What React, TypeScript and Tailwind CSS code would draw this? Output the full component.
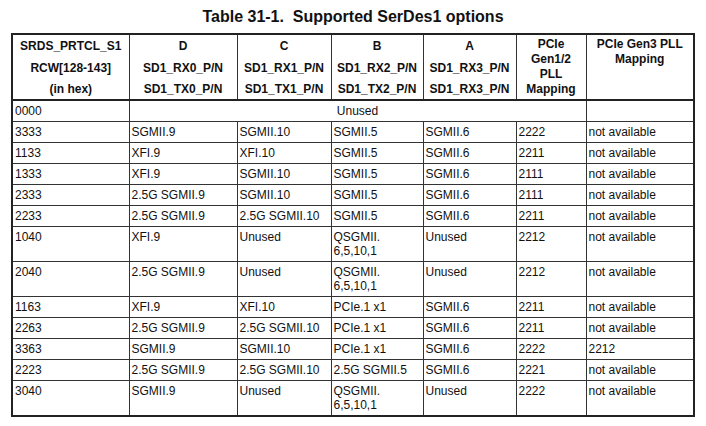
import React from "react";

type Row = {
  code: string;
  d?: string;
  c?: string;
  b?: string[];
  a?: string;
  gen12?: string;
  gen3?: string;
  tall?: boolean;
};

const rows: Row[] = [
  { code: "3333", d: "SGMII.9", c: "SGMII.10", b: ["SGMII.5"], a: "SGMII.6", gen12: "2222", gen3: "not available" },
  { code: "1133", d: "XFI.9", c: "XFI.10", b: ["SGMII.5"], a: "SGMII.6", gen12: "2211", gen3: "not available" },
  { code: "1333", d: "XFI.9", c: "SGMII.10", b: ["SGMII.5"], a: "SGMII.6", gen12: "2111", gen3: "not available" },
  { code: "2333", d: "2.5G SGMII.9", c: "SGMII.10", b: ["SGMII.5"], a: "SGMII.6", gen12: "2111", gen3: "not available" },
  { code: "2233", d: "2.5G SGMII.9", c: "2.5G SGMII.10", b: ["SGMII.5"], a: "SGMII.6", gen12: "2211", gen3: "not available" },
  { code: "1040", d: "XFI.9", c: "Unused", b: ["QSGMII.", "6,5,10,1"], a: "Unused", gen12: "2212", gen3: "not available", tall: true },
  { code: "2040", d: "2.5G SGMII.9", c: "Unused", b: ["QSGMII.", "6,5,10,1"], a: "Unused", gen12: "2212", gen3: "not available", tall: true },
  { code: "1163", d: "XFI.9", c: "XFI.10", b: ["PCIe.1 x1"], a: "SGMII.6", gen12: "2211", gen3: "not available" },
  { code: "2263", d: "2.5G SGMII.9", c: "2.5G SGMII.10", b: ["PCIe.1 x1"], a: "SGMII.6", gen12: "2211", gen3: "not available" },
  { code: "3363", d: "SGMII.9", c: "SGMII.10", b: ["PCIe.1 x1"], a: "SGMII.6", gen12: "2222", gen3: "2212" },
  { code: "2223", d: "2.5G SGMII.9", c: "2.5G SGMII.10", b: ["2.5G SGMII.5"], a: "SGMII.6", gen12: "2221", gen3: "not available" },
  { code: "3040", d: "SGMII.9", c: "Unused", b: ["QSGMII.", "6,5,10,1"], a: "Unused", gen12: "2222", gen3: "not available", tall: true },
];

const laneHeads = [
  ["D", "SD1_RX0_P/N", "SD1_TX0_P/N"],
  ["C", "SD1_RX1_P/N", "SD1_TX1_P/N"],
  ["B", "SD1_RX2_P/N", "SD1_TX2_P/N"],
  ["A", "SD1_RX3_P/N", "SD1_RX3_P/N"],
];

const th = "border border-[#333] border-b-2 border-b-[#222] p-0 align-top text-center font-bold";
const td = "border border-[#333] px-[2px] pt-[3px] pb-[3px] align-top text-left font-normal leading-[14px]";

// three stacked header lines, the last one a little shorter
function HeadLines({ lines }: { lines: string[] }) {
  return (
    <div className="flex flex-col">
      <span className="leading-[22px]">{lines[0]}</span>
      <span className="leading-[22px]">{lines[1]}</span>
      <span className="leading-[20px]">{lines[2]}</span>
    </div>
  );
}

export default function App() {
  return (
    <div
      className="w-[706px] h-[426px] bg-white text-[#111] overflow-hidden"
      style={{ fontFamily: '"Liberation Sans", Arial, sans-serif' }}
    >
      {/* Caption */}
      <div className="h-[33px] flex items-center justify-center">
        <h1 className="text-[16px] font-bold leading-none text-[#111] whitespace-pre">
          {"Table 31-1.  Supported SerDes1 options"}
        </h1>
      </div>

      <div className="pl-[11px]">
        <table className="table-fixed border-collapse border-2 border-[#222] w-[682px] text-[12px]">
          <colgroup>
            <col className="w-[117px]" />
            <col className="w-[108px]" />
            <col className="w-[94px]" />
            <col className="w-[92px]" />
            <col className="w-[93px]" />
            <col className="w-[70px]" />
            <col className="w-[108px]" />
          </colgroup>
          <thead>
            <tr>
              <th className={th}>
                <HeadLines lines={["SRDS_PRTCL_S1", "RCW[128-143]", "(in hex)"]} />
              </th>
              {laneHeads.map((h) => (
                <th key={h[0]} className={th}>
                  <HeadLines lines={h} />
                </th>
              ))}
              <th className={th}>
                <div className="flex flex-col pt-[2px] leading-[15px]">
                  <span>PCIe</span>
                  <span>Gen1/2</span>
                  <span>PLL</span>
                  <span>Mapping</span>
                </div>
              </th>
              <th className={th}>
                <div className="flex flex-col pt-[2px] leading-[15px]">
                  <span>PCIe Gen3 PLL</span>
                  <span>Mapping</span>
                </div>
              </th>
            </tr>
          </thead>
          <tbody>
            <tr className="h-[21px]">
              <td className={td}>0000</td>
              <td className={`${td} text-center`} colSpan={5}>
                <div className="text-center">Unused</div>
              </td>
              <td className={td}></td>
            </tr>
            {rows.map((r) => (
              <tr key={r.code} className={r.tall ? "h-[35px]" : "h-[21px]"}>
                <td className={td}>{r.code}</td>
                <td className={td}>{r.d}</td>
                <td className={td}>{r.c}</td>
                <td className={td}>
                  {r.b?.map((line, i) => (
                    <div key={i}>{line}</div>
                  ))}
                </td>
                <td className={td}>{r.a}</td>
                <td className={td}>{r.gen12}</td>
                <td className={td}>{r.gen3}</td>
              </tr>
            ))}
          </tbody>
        </table>
      </div>
    </div>
  );
}
